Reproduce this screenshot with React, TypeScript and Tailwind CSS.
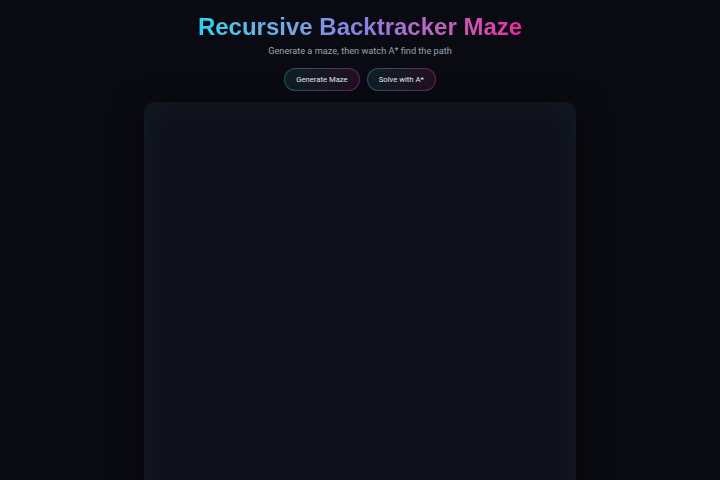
import React from "react";

function Btn({ children }: { children: React.ReactNode }) {
  return (
    <div className="flex rounded-full p-[1px] bg-gradient-to-r from-[#1f5560] to-[#5a2455]">
      <button className="h-[21px] px-[11px] rounded-full bg-gradient-to-r from-[#0c1f25] to-[#1f0f22] text-[7.7px] leading-[21px] text-[#e2e6ee]">
        {children}
      </button>
    </div>
  );
}

export default function App() {
  return (
    <div
      className="min-h-screen w-full bg-[#0a0b12] flex flex-col items-center pt-[13px] overflow-hidden"
      style={{ fontFamily: "Roboto, 'Liberation Sans', sans-serif" }}
    >
      <h1
        className="text-[24px] leading-[28px] font-bold bg-gradient-to-r from-[#22d3ee] via-[#8a80e0] to-[#e8259c] bg-clip-text text-transparent"
        style={{ fontFamily: "'Liberation Sans', Arial, sans-serif" }}
      >
        Recursive Backtracker Maze
      </h1>
      <p className="mt-[3px] text-[9.2px] leading-[14px] text-[#9ca2b0]">Generate a maze, then watch A* find the path</p>
      <div className="mt-[10px] flex gap-[7px]">
        <Btn>Generate Maze</Btn>
        <Btn>Solve with A*</Btn>
      </div>
      <div className="mt-[11px] w-[432px] h-[432px] shrink-0 rounded-[10px] bg-[#10111a] shadow-[inset_0_0_40px_rgba(34,211,238,0.05),0_10px_30px_rgba(0,0,0,0.6)] border border-[#14171f]" />
    </div>
  );
}
